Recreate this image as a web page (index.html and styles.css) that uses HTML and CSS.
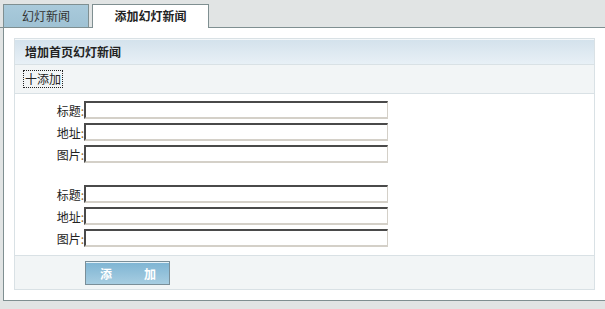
FILE: index.html
```html
<!DOCTYPE html>
<html lang="zh-CN">
<head>
	<meta charset="utf-8"/>
	<title>添加幻灯新闻</title>
	<link rel="stylesheet" href="styles.css">
</head>
<body>
	<div class="tabbar">
		<div class="tab">幻灯新闻</div>
		<div class="tab current">添加幻灯新闻</div>
	</div>

	<div class="panel">
		<div class="box">
			<div class="boxHead">增加首页幻灯新闻</div>
			<div class="toolRow"><span class="addLink">十添加</span></div>

			<div class="formArea">
				<div class="group">
					<div class="row"><label>标题<b>:</b></label><input type="text"></div>
					<div class="row"><label>地址<b>:</b></label><input type="text"></div>
					<div class="row"><label>图片<b>:</b></label><input type="text"></div>
				</div>
				<div class="group">
					<div class="row"><label>标题<b>:</b></label><input type="text"></div>
					<div class="row"><label>地址<b>:</b></label><input type="text"></div>
					<div class="row"><label>图片<b>:</b></label><input type="text"></div>
				</div>
			</div>

			<div class="boxFoot">
				<button class="btn"><span>添</span><span>加</span></button>
			</div>
		</div>
	</div>
</body>
</html>
```

FILE: styles.css
```css
body, html {
	margin: 0;
	background-color: #e1e4e4;
	font-family: "Noto Sans CJK SC", "DejaVu Sans", sans-serif;
	font-size: 12px;
	color: #222;
}

.tabbar {
	height: 23px;
	padding: 4px 0 0 3px;
	border-bottom: 1px solid #7f8f91;
	display: flex;
	gap: 3px;
	align-items: flex-end;
}

.tab {
	width: 84px;
	height: 22px;
	line-height: 22px;
	text-align: center;
	color: #333;
	background: linear-gradient(#a9cadb, #9fc2d4);
	border: 1px solid #7f8f91;
	border-bottom: none;
}
.tab.current {
	width: 115px;
	height: 23px;
	margin-bottom: -1px;
	background: #fff;
	font-weight: bold;
	color: #222;
}

.panel {
	margin-left: 3px;
	background: #fff;
	border-left: 1px solid #7f8f91;
	border-bottom: 1px solid #7f8f91;
	padding: 10px;
}

.box {
	border: 1px solid #d9e1e5;
}

.boxHead {
	box-sizing: border-box;
	height: 26px;
	line-height: 24px;
	padding-left: 10px;
	font-weight: bold;
	color: #222;
	background: linear-gradient(#d4e2ec, #e8f0f6);
	border-top: 1px solid #f4f8fa;
	border-bottom: 1px solid #d9e1e5;
}

.toolRow {
	height: 28px;
	padding-left: 9px;
	display: flex;
	align-items: center;
	background: #f2f5f6;
	border-bottom: 1px solid #d9e1e5;
}
.addLink {
	outline: 1px dotted #222;
	line-height: 16px;
	padding: 0 1px;
	color: #222;
}

.formArea {
	padding: 7px 0 8px 0;
}
.group {
	display: flex;
	flex-direction: column;
	gap: 4px;
}
.group + .group {
	margin-top: 22px;
}
.row {
	display: flex;
	align-items: center;
	height: 18px;
}
.row label {
	width: 69px;
	text-align: right;
	color: #222;
}
.row label b {
	font-weight: normal;
	color: #9a6a2a;
}
.row input {
	box-sizing: border-box;
	width: 304px;
	height: 18px;
	margin: 0;
	padding: 0;
	border-top: 2px solid #4a4a4a;
	border-left: 2px solid #4a4a4a;
	border-right: 1px solid #d4d0c8;
	border-bottom: 2px solid #d4d0c8;
	background: #fff;
}

.boxFoot {
	height: 34px;
	padding: 5px 0 0 70px;
	box-sizing: border-box;
	background: #f2f5f6;
	border-top: 1px solid #d9e1e5;
}
.btn {
	display: flex;
	justify-content: space-between;
	align-items: center;
	width: 85px;
	height: 24px;
	margin: 0;
	padding: 0 13px 0 14px;
	border: 1px solid #7a8e98;
	box-shadow: inset 0 1px 0 #e6f2f8;
	background: linear-gradient(#7db4d3, #a7cde1);
	color: #fff;
	font-family: inherit;
	font-size: 12px;
	font-weight: bold;
}
```
